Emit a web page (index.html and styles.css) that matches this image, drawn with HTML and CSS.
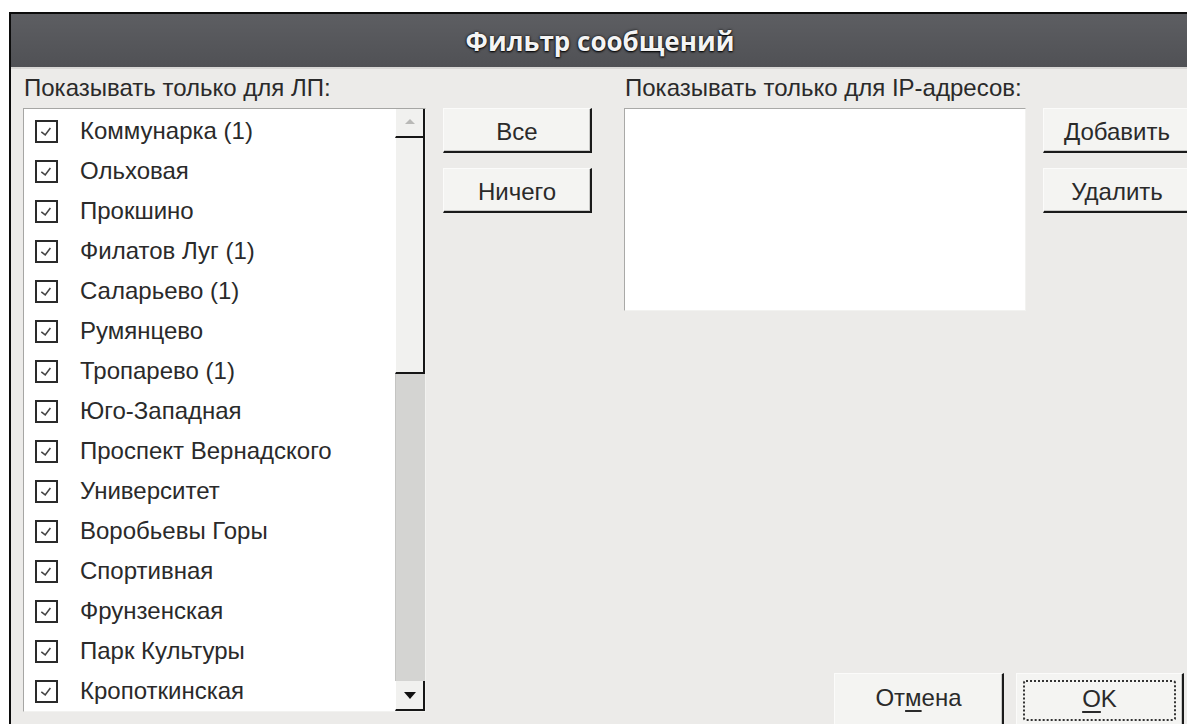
FILE: index.html
```html
<!DOCTYPE html>
<html lang="ru">
<head>
<meta charset="utf-8">
<title>Фильтр сообщений</title>
<link rel="stylesheet" href="styles.css">
</head>
<body>
<div class="dialog">
  <div class="titlebar"><span class="title">Фильтр сообщений</span></div>
  <div class="content">
    <div class="col-left">
      <div class="label">Показывать только для ЛП:</div>
      <div class="listbox">
        <ul class="items">
          <li class="item"><span class="check"><svg viewBox="0 0 22 22"><path d="M5 11.5 L9.5 15 L15.5 7"/></svg></span>Коммунарка (1)</li>
          <li class="item"><span class="check"><svg viewBox="0 0 22 22"><path d="M5 11.5 L9.5 15 L15.5 7"/></svg></span>Ольховая</li>
          <li class="item"><span class="check"><svg viewBox="0 0 22 22"><path d="M5 11.5 L9.5 15 L15.5 7"/></svg></span>Прокшино</li>
          <li class="item"><span class="check"><svg viewBox="0 0 22 22"><path d="M5 11.5 L9.5 15 L15.5 7"/></svg></span>Филатов Луг (1)</li>
          <li class="item"><span class="check"><svg viewBox="0 0 22 22"><path d="M5 11.5 L9.5 15 L15.5 7"/></svg></span>Саларьево (1)</li>
          <li class="item"><span class="check"><svg viewBox="0 0 22 22"><path d="M5 11.5 L9.5 15 L15.5 7"/></svg></span>Румянцево</li>
          <li class="item"><span class="check"><svg viewBox="0 0 22 22"><path d="M5 11.5 L9.5 15 L15.5 7"/></svg></span>Тропарево (1)</li>
          <li class="item"><span class="check"><svg viewBox="0 0 22 22"><path d="M5 11.5 L9.5 15 L15.5 7"/></svg></span>Юго-Западная</li>
          <li class="item"><span class="check"><svg viewBox="0 0 22 22"><path d="M5 11.5 L9.5 15 L15.5 7"/></svg></span>Проспект Вернадского</li>
          <li class="item"><span class="check"><svg viewBox="0 0 22 22"><path d="M5 11.5 L9.5 15 L15.5 7"/></svg></span>Университет</li>
          <li class="item"><span class="check"><svg viewBox="0 0 22 22"><path d="M5 11.5 L9.5 15 L15.5 7"/></svg></span>Воробьевы Горы</li>
          <li class="item"><span class="check"><svg viewBox="0 0 22 22"><path d="M5 11.5 L9.5 15 L15.5 7"/></svg></span>Спортивная</li>
          <li class="item"><span class="check"><svg viewBox="0 0 22 22"><path d="M5 11.5 L9.5 15 L15.5 7"/></svg></span>Фрунзенская</li>
          <li class="item"><span class="check"><svg viewBox="0 0 22 22"><path d="M5 11.5 L9.5 15 L15.5 7"/></svg></span>Парк Культуры</li>
          <li class="item"><span class="check"><svg viewBox="0 0 22 22"><path d="M5 11.5 L9.5 15 L15.5 7"/></svg></span>Кропоткинская</li>
        </ul>
        <div class="scrollbar">
          <div class="sb-btn sb-up"><span class="arrow-up"></span></div>
          <div class="sb-thumb"></div>
          <div class="sb-trough"></div>
          <div class="sb-btn sb-down"><span class="arrow-down"></span></div>
        </div>
      </div>
    </div>

    <div class="col-mid">
      <button class="btn">Все</button>
      <button class="btn">Ничего</button>
    </div>

    <div class="col-right">
      <div class="label">Показывать только для IP-адресов:</div>
      <div class="ip-row">
        <div class="ip-box"></div>
        <div class="ip-buttons">
          <button class="btn">Добавить</button>
          <button class="btn">Удалить</button>
        </div>
      </div>
      <div class="footer">
        <button class="btn btn-wide">От<u>м</u>ена</button>
        <button class="btn btn-wide btn-default"><span class="focus"><u>O</u>K</span></button>
      </div>
    </div>
  </div>
</div>
</body>
</html>
```

FILE: styles.css
```css
html, body {
  margin: 0;
  padding: 0;
  background: #ffffff;
  height: 724px;
  overflow: hidden;
}

body {
  font-family: "Liberation Sans", Arimo, Arial, sans-serif;
  font-size: 24px;
  color: #2a2a2a;
}

.dialog {
  margin: 12px 0 0 9px;
  width: 1200px;
  height: 730px;
  border-left: 2px solid #0c0c0c;
  border-top: 2px solid #0c0c0c;
  background: #ecebe9;
  overflow: hidden;
}

/* window title */
.titlebar {
  height: 53px;
  background: linear-gradient(#5d5e62, #505155);
  border-bottom: 2px solid #d9d8d6;
  display: flex;
  align-items: center;
  justify-content: center;
  padding-right: 22px;
}

.title {
  font-family: "Open Sans", "DejaVu Sans", sans-serif;
  font-weight: 700;
  font-size: 26px;
  color: #f4f4f4;
  text-shadow: 0 1px 2px #000, 0 0 3px rgba(0, 0, 0, 0.8);
}

/* dialog body */
.content {
  display: flex;
  padding: 6px 0 0 12px;
  height: 654px;
}

.label {
  height: 26px;
  line-height: 26px;
  padding-left: 1px;
  margin-bottom: 7px;
  white-space: nowrap;
}

.col-left {
  width: 403px;
  flex: none;
}

/* checklist with scrollbar */
.listbox {
  box-sizing: border-box;
  width: 403px;
  height: 604px;
  border: 1px solid #a6a6a4;
  border-right-color: #f2f2f0;
  border-bottom-color: #f2f2f0;
  background: #ffffff;
  display: flex;
}

.items {
  list-style: none;
  margin: 0;
  padding: 2px 0 0 11px;
  flex: 1;
}

.item {
  height: 40px;
  display: flex;
  align-items: center;
  white-space: nowrap;
}

.check {
  box-sizing: border-box;
  width: 23px;
  height: 23px;
  border: 2px solid #2a2a2a;
  margin-right: 22px;
  flex: none;
  display: flex;
}

.check svg {
  width: 19px;
  height: 19px;
}

.check path {
  fill: none;
  stroke: #444;
  stroke-width: 1.8;
}

.scrollbar {
  width: 30px;
  flex: none;
  display: flex;
  flex-direction: column;
  background: #d4d4d2;
}

.sb-btn,
.sb-thumb {
  box-sizing: border-box;
  background: #f1f1ef;
  border-left: 1px solid #ffffff;
  border-right: 2px solid #161616;
  border-bottom: 2px solid #161616;
  display: flex;
  justify-content: center;
}

.sb-up {
  height: 29px;
  align-items: flex-start;
  padding-top: 10px;
}

.sb-thumb {
  height: 236px;
}

.sb-trough {
  flex: 1;
  border-left: 1px solid #c4c4c2;
}

.sb-down {
  height: 30px;
  align-items: center;
}

.arrow-up {
  width: 0;
  height: 0;
  border-left: 5px solid transparent;
  border-right: 5px solid transparent;
  border-bottom: 5px solid #b9b9b7;
}

.arrow-down {
  width: 0;
  height: 0;
  border-left: 6px solid transparent;
  border-right: 6px solid transparent;
  border-top: 7px solid #111;
}

/* push buttons */
.btn {
  box-sizing: border-box;
  width: 149px;
  height: 45px;
  padding: 3px 0 0 0;
  font-family: inherit;
  font-size: 24px;
  color: #2a2a2a;
  background: #f4f4f2;
  border: none;
  border-top: 1px solid #fbfbfa;
  border-left: 1px solid #fbfbfa;
  border-right: 2px solid #1a1a1a;
  border-bottom: 2px solid #1a1a1a;
  box-shadow: inset -1px -1px 0 #c9c9c7;
}

.col-mid {
  margin-left: 17px;
  padding-top: 33px;
  display: flex;
  flex-direction: column;
  gap: 15px;
  flex: none;
}

.col-right {
  margin-left: 32px;
  flex: 1;
  display: flex;
  flex-direction: column;
}

.ip-row {
  display: flex;
  gap: 17px;
}

.ip-box {
  box-sizing: border-box;
  width: 402px;
  height: 203px;
  background: #ffffff;
  border-top: 1px solid #a9a9a7;
  border-left: 1px solid #a9a9a7;
  border-right: 1px solid #f2f2f0;
  border-bottom: 1px solid #f2f2f0;
}

.ip-buttons {
  display: flex;
  flex-direction: column;
  gap: 15px;
}

.footer {
  margin-top: auto;
  display: flex;
  justify-content: flex-end;
  gap: 12px;
  padding-right: 27px;
}

.btn-wide {
  width: 170px;
  height: 56px;
  padding: 0 0 6px 0;
}

.btn-default {
  width: 168px;
  padding: 6px;
  display: flex;
}

.focus {
  flex: 1;
  border: 2px dotted #333;
  border-radius: 3px;
  display: flex;
  align-items: center;
  justify-content: center;
  padding-bottom: 3px;
}

u {
  text-decoration-thickness: 2px;
  text-underline-offset: 4px;
}
```
